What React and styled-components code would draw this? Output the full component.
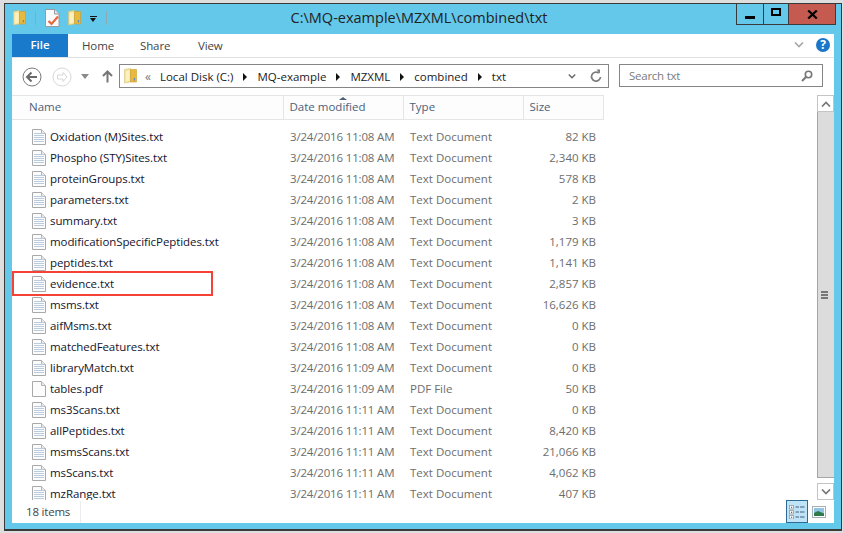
import { createGlobalStyle, styled } from "styled-components";

const files = [
  ["Oxidation (M)Sites.txt", "3/24/2016 11:08 AM", "Text Document", "82 KB"],
  ["Phospho (STY)Sites.txt", "3/24/2016 11:08 AM", "Text Document", "2,340 KB"],
  ["proteinGroups.txt", "3/24/2016 11:08 AM", "Text Document", "578 KB"],
  ["parameters.txt", "3/24/2016 11:08 AM", "Text Document", "2 KB"],
  ["summary.txt", "3/24/2016 11:08 AM", "Text Document", "3 KB"],
  ["modificationSpecificPeptides.txt", "3/24/2016 11:08 AM", "Text Document", "1,179 KB"],
  ["peptides.txt", "3/24/2016 11:08 AM", "Text Document", "1,141 KB"],
  ["evidence.txt", "3/24/2016 11:08 AM", "Text Document", "2,857 KB"],
  ["msms.txt", "3/24/2016 11:08 AM", "Text Document", "16,626 KB"],
  ["aifMsms.txt", "3/24/2016 11:08 AM", "Text Document", "0 KB"],
  ["matchedFeatures.txt", "3/24/2016 11:08 AM", "Text Document", "0 KB"],
  ["libraryMatch.txt", "3/24/2016 11:09 AM", "Text Document", "0 KB"],
  ["tables.pdf", "3/24/2016 11:09 AM", "PDF File", "50 KB"],
  ["ms3Scans.txt", "3/24/2016 11:11 AM", "Text Document", "0 KB"],
  ["allPeptides.txt", "3/24/2016 11:11 AM", "Text Document", "8,420 KB"],
  ["msmsScans.txt", "3/24/2016 11:11 AM", "Text Document", "21,066 KB"],
  ["msScans.txt", "3/24/2016 11:11 AM", "Text Document", "4,062 KB"],
  ["mzRange.txt", "3/24/2016 11:11 AM", "Text Document", "407 KB"],
];

const crumbs = ["Local Disk (C:)", "MQ-example", "MZXML", "combined", "txt"];

const FolderIcon = ({ size = 13 }) => (
  <svg width={size} height={size + 3} viewBox="0 0 14 16" preserveAspectRatio="none">
    <path d="M0.5 1.5 L7 0.5 V14 L0.5 15 Z" fill="#f6e39a" stroke="#d9bf6a" strokeWidth="0.6" />
    <path d="M7 1.5 H13.5 V14 H7 Z" fill="#e8b93f" stroke="#c99a2c" strokeWidth="0.6" />
    <path d="M2 3 L6 2.5 V12.5 L2 13.5 Z" fill="#fbf0c0" />
    <rect x="10.5" y="10" width="1.4" height="2.4" fill="#5a8fc8" />
  </svg>
);

const NoteCheckIcon = () => (
  <svg width="15" height="18" viewBox="0 0 15 18">
    <path d="M0.5 0.5 H9.5 L14 5 V17.5 H0.5 Z" fill="#fbfbfb" stroke="#9a9a9a" />
    <path d="M9.5 0.5 V5 H14" fill="#e6e6e6" stroke="#9a9a9a" />
    <path d="M3.5 12 L6.5 15 L13 7.5" fill="none" stroke="#e8683c" strokeWidth="2.2" />
  </svg>
);

const FileIcon = ({ lines }) => (
  <svg width="14" height="16" viewBox="0 0 14 16">
    <path d="M0.5 0.5 H9.5 L13.5 4.5 V15.5 H0.5 Z" fill="#fcfcfc" stroke="#a9a9a9" />
    <path d="M9.5 0.5 V4.5 H13.5" fill="#e9e9e9" stroke="#b5b5b5" />
    {lines &&
      [4, 6, 8, 10, 12].map((y) => (
        <rect key={y} x="2" y={y} width="10" height="1" fill="#b9cbdc" />
      ))}
  </svg>
);

const BackIcon = ({ faded }) => {
  const c = faded ? "#d8d8d8" : "#7a7a7a";
  return (
    <svg width="20" height="20" viewBox="0 0 20 20">
      <circle cx="10" cy="10" r="9" fill="#fff" stroke={c} />
      {faded ? (
        <path d="M11 5.5 L15 10 L11 14.5 V12 H5.5 V8 H11 Z" fill="#fff" stroke={c} />
      ) : (
        <path d="M9.5 5.5 L5 10 L9.5 14.5 M5 10 H15" fill="none" stroke="#6a6a6a" strokeWidth="2" />
      )}
    </svg>
  );
};

const UpIcon = () => (
  <svg width="11" height="13" viewBox="0 0 11 13">
    <path d="M5.5 12.5 V1.5 M1 6 L5.5 1.5 L10 6" fill="none" stroke="#767676" strokeWidth="2" />
  </svg>
);

const Chevron = ({ up, color = "#777", w = 10, h = 6 }) => (
  <svg width={w} height={h} viewBox="0 0 10 6">
    <path d={up ? "M1 5.5 L5 1.5 L9 5.5" : "M1 0.5 L5 4.5 L9 0.5"} fill="none" stroke={color} strokeWidth="1.7" />
  </svg>
);

const RefreshIcon = () => (
  <svg width="12" height="14" viewBox="0 0 12 14">
    <path d="M8.7 4 A4.5 4.5 0 1 0 10.5 8" fill="none" stroke="#7c7c7c" strokeWidth="1.7" />
    <path d="M6.5 0.5 L10 0.5 V4.8 Z" fill="#7c7c7c" />
  </svg>
);

const SearchIcon = () => (
  <svg width="12" height="12" viewBox="0 0 12 12">
    <circle cx="7.5" cy="4.5" r="3.2" fill="none" stroke="#777" strokeWidth="1.6" />
    <path d="M5 7 L1 11" stroke="#777" strokeWidth="2" />
  </svg>
);

const CloseIcon = () => (
  <svg width="11" height="9" viewBox="0 0 11 9">
    <path d="M1.2 0.5 L9.8 8.5 M9.8 0.5 L1.2 8.5" stroke="#000" strokeWidth="2.2" />
  </svg>
);

const DetailsIcon = () => (
  <svg width="16" height="14" viewBox="0 0 16 14">
    {[0, 5, 10].map((y, i) => (
      <g key={y}>
        <rect x="0.5" y={y + 0.5} width="4" height="3.4" fill="#fff" stroke="#9a9a9a" strokeWidth="0.8" />
        <rect x="2" y={y + 1.7} width="1.2" height="1.2" fill={i === 1 ? "#b4342c" : "#55708c"} />
        <rect x="6.5" y={y + 1.5} width="3.5" height="1" fill="#44617f" />
        <rect x="11" y={y + 1.5} width="4.5" height="1" fill="#44617f" />
      </g>
    ))}
  </svg>
);

const PreviewIcon = () => (
  <svg width="14" height="12" viewBox="0 0 14 12">
    <rect x="0.5" y="0.5" width="13" height="11" fill="#fff" stroke="#a5adb5" />
    <rect x="2" y="2" width="10" height="8" fill="#8fc4e4" />
    <path d="M2 7 L6 5 L12 7.5 V10 H2 Z" fill="#2f7a4a" />
  </svg>
);

const App = () => {
  return (
    <>
      <GlobalStyle />
      <Window>
        <TitleBar>
          <QuickAccess>
            <FolderIcon />
            <QuickDivider />
            <NoteCheckIcon />
            <FolderIcon />
            <QuickDrop>
              <i />
              <b />
            </QuickDrop>
            <QuickDivider />
          </QuickAccess>
          <Title>C:\MQ-example\MZXML\combined\txt</Title>
          <WindowButtons>
            <WindowButton $w={28}>
              <MinGlyph />
            </WindowButton>
            <WindowButton $w={26}>
              <MaxGlyph />
            </WindowButton>
            <WindowButton $w={47} $close>
              <CloseIcon />
            </WindowButton>
          </WindowButtons>
        </TitleBar>

        <Panel>
          <Ribbon>
            <FileTab>File</FileTab>
            <RibbonTab>Home</RibbonTab>
            <RibbonTab>Share</RibbonTab>
            <RibbonTab>View</RibbonTab>
            <RibbonRight>
              <Chevron color="#a9a9a9" w={10} h={6} />
              <HelpBadge>?</HelpBadge>
            </RibbonRight>
          </Ribbon>

          <NavBar>
            <BackIcon />
            <BackIcon faded />
            <NavDrop />
            <UpIcon />
            <AddressBar>
              <FolderIcon />
              <Overflow>«</Overflow>
              {crumbs.map((c, i) => (
                <Crumb key={c}>
                  {c}
                  {i < crumbs.length - 1 && <CrumbArrow />}
                </Crumb>
              ))}
              <AddressTools>
                <Chevron color="#666" w={8} h={5} />
                <RefreshIcon />
              </AddressTools>
            </AddressBar>
            <SearchBox>
              Search txt
              <SearchIcon />
            </SearchBox>
          </NavBar>

          <Main>
            <ListArea>
              <Header>
                <HeaderCell>Name</HeaderCell>
                <HeaderCell>
                  <SortArrow />
                  Date modified
                </HeaderCell>
                <HeaderCell>Type</HeaderCell>
                <HeaderCell>Size</HeaderCell>
              </Header>
              <Rows>
                {files.map(([name, date, type, size]) => (
                  <Row key={name}>
                    <NameCell>
                      <FileIcon lines={!name.endsWith(".pdf")} />
                      {name}
                    </NameCell>
                    <DateCell>{date}</DateCell>
                    <InfoCell>{type}</InfoCell>
                    <SizeCell>{size}</SizeCell>
                    {name === "evidence.txt" && <Highlight />}
                  </Row>
                ))}
              </Rows>
            </ListArea>
            <ScrollBar>
              <ScrollButton>
                <Chevron up />
              </ScrollButton>
              <ScrollThumb>
                <Grip />
              </ScrollThumb>
              <ScrollButton $down>
                <Chevron />
              </ScrollButton>
            </ScrollBar>
          </Main>

          <StatusBar>
            <ItemCount>18 items</ItemCount>
            <ViewButtons>
              <ViewButton $active>
                <DetailsIcon />
              </ViewButton>
              <ViewButton>
                <PreviewIcon />
              </ViewButton>
            </ViewButtons>
          </StatusBar>
        </Panel>
      </Window>
    </>
  );
};

const GlobalStyle = createGlobalStyle`
  html, body {
    margin: 0;
    background: #dedede;
  }
  body {
    font-family: "Open Sans", "Noto Sans", sans-serif;
    font-size: 12px;
    overflow: hidden;
  }
  * {
    box-sizing: border-box;
  }
`;

const Window = styled.div`
  margin: 3px 0 0 4px;
  width: 838px;
  height: 528px;
  border: 1px solid #3a3a3a;
  border-bottom-width: 2px;
  background: #63c8ea;
  display: flex;
  flex-direction: column;
`;

const TitleBar = styled.div`
  height: 30px;
  flex: none;
  display: grid;
  grid-template-columns: 250px 1fr 250px;
`;

const QuickAccess = styled.div`
  display: flex;
  align-items: center;
  gap: 8px;
  padding: 0 0 2px 8px;
`;

const QuickDivider = styled.span`
  width: 1px;
  height: 14px;
  background: #8fa9b5;
  margin: 0 1px;
`;

const QuickDrop = styled.span`
  display: flex;
  flex-direction: column;
  align-items: center;
  gap: 1px;
  width: 8px;
  margin: 2px 0 0 0;

  i {
    width: 7px;
    height: 1px;
    background: #111;
  }
  b {
    width: 0;
    height: 0;
    border: 3px solid transparent;
    border-top: 4px solid #111;
    border-bottom: 0;
  }
`;

const Title = styled.div`
  font-size: 14.5px;
  line-height: 28px;
  text-align: center;
  color: #222;
  white-space: nowrap;
  transform: translateX(-4px);
`;

const WindowButtons = styled.div`
  display: flex;
  justify-content: flex-end;
  align-items: flex-start;
  padding-right: 5px;
`;

const WindowButton = styled.div`
  width: ${(p) => p.$w}px;
  height: 21px;
  border: 1px solid #3a3a3a;
  border-top: 0;
  border-left-width: ${(p) => (p.$close ? 0 : 1)}px;
  margin-left: ${(p) => (p.$w === 26 ? -1 : 0)}px;
  background: ${(p) => (p.$close ? "#c45a50" : "transparent")};
  display: flex;
  align-items: center;
  justify-content: center;
`;

const MinGlyph = styled.span`
  width: 10px;
  height: 3px;
  background: #000;
  margin-top: 7px;
`;

const MaxGlyph = styled.span`
  width: 10px;
  height: 8px;
  border: 2px solid #000;
  margin-top: -4px;
`;

const Panel = styled.div`
  flex: 1;
  margin: 0 7px 6px;
  min-height: 0;
  background: #fff;
  display: flex;
  flex-direction: column;
`;

const Ribbon = styled.div`
  height: 24px;
  flex: none;
  display: flex;
  align-items: stretch;
  border-bottom: 1px solid #e2e2e2;
`;

const FileTab = styled.div`
  width: 56px;
  background: #1979ca;
  color: #fff;
  font-size: 11.5px;
  line-height: 22px;
  text-align: center;
  font-weight: 600;
`;

const RibbonTab = styled.div`
  width: 58px;
  padding-left: 14px;
  font-size: 11.5px;
  letter-spacing: -0.12px;
  line-height: 24px;
  color: #444;
`;

const RibbonRight = styled.div`
  margin-left: auto;
  display: flex;
  align-items: center;
  gap: 12px;
  padding: 0 4px 2px 0;
`;

const HelpBadge = styled.span`
  width: 14px;
  height: 14px;
  border-radius: 50%;
  background: #1a76c8;
  color: #fff;
  font-weight: 700;
  font-size: 12px;
  line-height: 14px;
  text-align: center;
`;

const NavBar = styled.div`
  height: 37px;
  flex: none;
  display: flex;
  align-items: flex-start;
  padding: 6px 11px 0 10px;

  > svg {
    margin-top: 3px;
    margin-right: 10px;
  }
  > svg:nth-of-type(3) {
    margin-top: 6px;
    margin-right: 6px;
  }
`;

const NavDrop = styled.span`
  width: 0;
  height: 0;
  margin: 10px 13px 0 -1px;
  border: 4px solid transparent;
  border-top: 5px solid #8a8a8a;
  border-bottom: 0;
`;

const AddressBar = styled.div`
  width: 490px;
  height: 24px;
  flex: none;
  border: 1px solid #858585;
  display: flex;
  align-items: center;
  padding: 0 6px 0 4px;
  color: #1a1a1a;
  font-size: 11.5px;
  white-space: nowrap;
`;

const Overflow = styled.span`
  margin: 0 9px 0 8px;
  color: #777;
  font-size: 12px;
`;

const Crumb = styled.span`
  display: flex;
  align-items: center;
`;

const CrumbArrow = styled.span`
  width: 0;
  height: 0;
  margin: 1px 10px 0 10px;
  border: 4px solid transparent;
  border-left: 4px solid #111;
  border-right: 0;
`;

const AddressTools = styled.div`
  margin-left: auto;
  display: flex;
  align-items: center;
  gap: 14px;
`;

const SearchBox = styled.div`
  width: 204px;
  height: 23px;
  flex: none;
  margin-left: 10px;
  border: 1px solid #858585;
  display: flex;
  align-items: center;
  justify-content: space-between;
  padding: 0 9px;
  color: #7b7b7b;
  font-size: 11.5px;
  letter-spacing: -0.25px;
`;

const Main = styled.div`
  flex: 1;
  min-height: 0;
  display: flex;
`;

const ListArea = styled.div`
  flex: 1;
  min-width: 0;
  display: flex;
  flex-direction: column;
`;

const Header = styled.div`
  width: 592px;
  height: 25px;
  flex: none;
  display: grid;
  grid-template-columns: 271.5px 120px 120px 80px;
  background: #fdfdfd;
  border: 1px solid #e5e5e5;
  border-left: 0;
`;

const HeaderCell = styled.div`
  position: relative;
  padding-left: 6px;
  border-right: 1px solid #e5e5e5;
  line-height: 22px;
  font-size: 11.5px;
  color: #4c607a;

  &:first-child {
    padding-left: 17px;
  }
  &:last-child {
    border-right: 0;
  }
`;

const SortArrow = styled.span`
  position: absolute;
  left: 55px;
  top: 1px;
  width: 0;
  height: 0;
  border: 4px solid transparent;
  border-bottom: 3px solid #4c607a;
  border-top: 0;
`;

const Rows = styled.div`
  flex: 1;
  min-height: 0;
  overflow: hidden;
  padding-top: 6px;
`;

const Row = styled.div`
  position: relative;
  height: 21px;
  display: grid;
  grid-template-columns: 272px 120px 120px 80px;
  align-items: center;
  width: 592px;
  font-size: 11.5px;
  white-space: nowrap;
`;

const NameCell = styled.div`
  display: flex;
  align-items: center;
  gap: 4px;
  padding-left: 20px;
  color: #14142c;
  letter-spacing: -0.08px;
`;

const InfoCell = styled.div`
  padding-left: 6px;
  color: #6d6d6d;
`;

const DateCell = styled(InfoCell)`
  letter-spacing: -0.17px;
`;

const SizeCell = styled.div`
  padding-right: 8px;
  text-align: right;
  color: #6d6d6d;
`;

const Highlight = styled.div`
  position: absolute;
  left: 0;
  top: -2px;
  width: 201px;
  height: 25px;
  border: 2px solid #f44336;
`;

const ScrollBar = styled.div`
  width: 17px;
  flex: none;
  display: flex;
  flex-direction: column;
`;

const ScrollButton = styled.div`
  height: 17px;
  flex: none;
  border: 1px solid #c4c4c4;
  background: #fff;
  margin-top: ${(p) => (p.$down ? 5 : 0)}px;
  display: flex;
  align-items: center;
  justify-content: center;
`;

const ScrollThumb = styled.div`
  flex: 1;
  background: #dcdcdc;
  border-left: 1px solid #a6a6a6;
  border-bottom: 1px solid #a6a6a6;
  display: flex;
  align-items: center;
  justify-content: center;
  padding-right: 4px;
`;

const Grip = styled.span`
  width: 7px;
  height: 8px;
  border-top: 2px solid #777;
  border-bottom: 2px solid #777;
  background: linear-gradient(#777, #777) center / 100% 2px no-repeat;
`;

const StatusBar = styled.div`
  height: 23px;
  flex: none;
  display: flex;
  align-items: center;
  padding-left: 14px;
`;

const ItemCount = styled.div`
  width: 55px;
  color: #444;
  font-size: 11.5px;
  letter-spacing: -0.2px;
  border-right: 1px solid #ececec;
  line-height: 22px;
`;

const ViewButtons = styled.div`
  margin-left: auto;
  display: flex;
  align-self: stretch;
  padding-right: 6px;
`;

const ViewButton = styled.div`
  width: ${(p) => (p.$active ? 22 : 18)}px;
  margin-right: ${(p) => (p.$active ? 2 : 0)}px;
  display: flex;
  align-items: center;
  justify-content: center;
  background: ${(p) => (p.$active ? "#bfe3f7" : "transparent")};
  border: ${(p) => (p.$active ? "1px solid #2d6a96" : "0")};
`;

export default App;
